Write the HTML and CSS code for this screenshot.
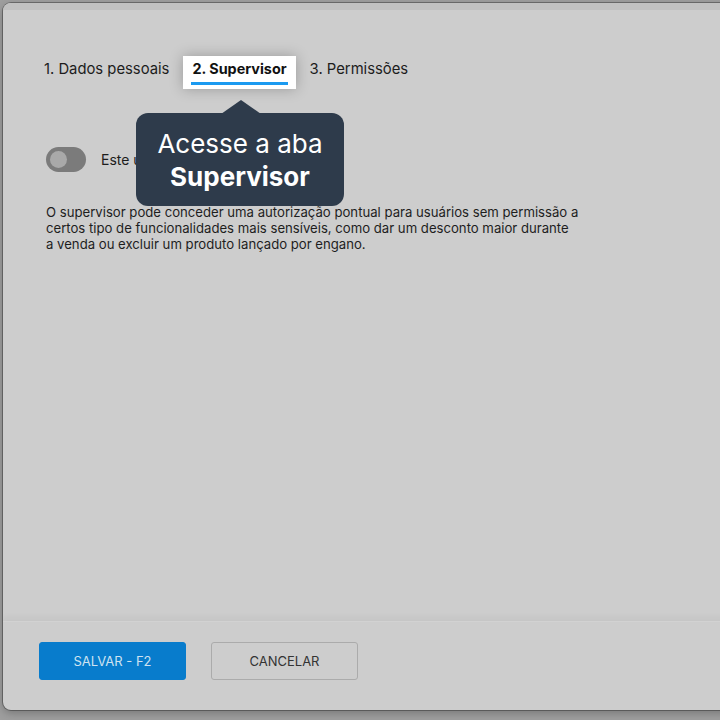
FILE: index.html
```html
<!DOCTYPE html>
<html lang="pt-BR">
<head>
    <meta charset="UTF-8">
    <meta name="viewport" content="width=device-width, initial-scale=1.0">
    <title>Novo usuário</title>
    <link rel="stylesheet" href="styles.css">
</head>
<body>

    <div class="modal">
        <div class="modal-top"></div>

        <div class="modal-body">
            <nav class="tabs">
                <div class="tab"><span class="tab-label">1. Dados pessoais</span></div>
                <div class="tab active"><span class="tab-label">2. Supervisor</span><span class="tab-line"></span></div>
                <div class="tab"><span class="tab-label">3. Permissões</span></div>
            </nav>

            <div class="switch-row">
                <span class="switch"><span class="knob"></span></span>
                <span class="switch-text">Este usuário é supervisor</span>
            </div>

            <p class="hint">O supervisor pode conceder uma autorização pontual para usuários sem permissão a certos tipo de funcionalidades mais sensíveis, como dar um desconto maior durante a venda ou excluir um produto lançado por engano.</p>

            <div class="tour-tip">
                <span class="tip-arrow"></span>
                Acesse a aba<br><strong>Supervisor</strong>
            </div>
        </div>

        <div class="modal-footer">
            <button class="btn btn-primary">SALVAR - F2</button>
            <button class="btn btn-outline">CANCELAR</button>
        </div>
    </div>

</body>
</html>
```

FILE: styles.css
```css
/* Reset */
* {
    margin: 0;
    padding: 0;
    box-sizing: border-box;
    font-family: Inter, "Noto Sans", sans-serif;
}

body {
    background: #9e9e9e;
    height: 720px;
    overflow: hidden;
    padding: 3px 0 0 3px;
}

/* Modal (escurecido pelo overlay do tour) */
.modal {
    width: 740px;
    height: 707px;
    background: #cdcdcd;
    border-radius: 8px;
    box-shadow: 0 0 0 1px rgba(0, 0, 0, 0.3), 0 3px 8px rgba(0, 0, 0, 0.25);
    display: flex;
    flex-direction: column;
    overflow: hidden;
}

.modal-top {
    height: 7px;
    background: #c1c1c1;
}

.modal-body {
    position: relative;
    flex: 1;
    padding: 46px 32px 0 32px;
}

/* Abas */
.tabs {
    display: flex;
    gap: 5px;
}

.tab {
    display: flex;
    flex-direction: column;
    padding: 3px 9px 4px;
    font-size: 14.8px;
    color: #1c1c1c;
}

.tab-label {
    line-height: 20px;
}

.tab.active {
    background: #fff;
    font-size: 14.4px;
    font-weight: 700;
    color: #111;
    box-shadow: 0 0 14px rgba(0, 0, 0, 0.25);
}

.tab-line {
    height: 3px;
    margin: 3px -1px 0;
    background: #1b9af0;
}

/* Switch */
.switch-row {
    display: flex;
    align-items: center;
    gap: 15px;
    margin: 58px 0 0 11px;
}

.switch {
    width: 40px;
    height: 25px;
    border-radius: 13px;
    background: #7b7b7b;
    padding: 4px;
}

.knob {
    display: block;
    width: 17px;
    height: 17px;
    border-radius: 50%;
    background: #a9a9a9;
}

.switch-text {
    font-size: 14px;
    color: #1c1c1c;
}

.hint {
    margin: 32px 0 0 11px;
    width: 533px;
    font-size: 13.15px;
    line-height: 16px;
    color: #1e1e1e;
}

/* Balão do tour */
.tour-tip {
    position: absolute;
    left: 133px;
    top: 103px;
    width: 208px;
    height: 93px;
    background: #2e3b4b;
    border-radius: 12px;
    color: #fff;
    text-align: center;
    font-size: 26px;
    line-height: 33px;
    padding-top: 14px;
}

.tour-tip strong {
    font-weight: 700;
}

.tip-arrow {
    position: absolute;
    left: 85px;
    top: -13px;
    width: 0;
    height: 0;
    border-left: 20px solid transparent;
    border-right: 20px solid transparent;
    border-bottom: 14px solid #2e3b4b;
}

/* Rodapé */
.modal-footer {
    height: 89px;
    display: flex;
    gap: 25px;
    padding: 20px 0 0 36px;
    border-top: 1px solid #d2d2d2;
    box-shadow: 0 -4px 6px rgba(0, 0, 0, 0.04);
}

.btn {
    width: 147px;
    height: 38px;
    border-radius: 3px;
    font-size: 13px;
    cursor: pointer;
}

.btn-primary {
    background: #087ccc;
    border: 1px solid #087ccc;
    color: #cfe3f1;
}

.btn-outline {
    background: transparent;
    border: 1px solid #ababab;
    color: #333;
}
```
